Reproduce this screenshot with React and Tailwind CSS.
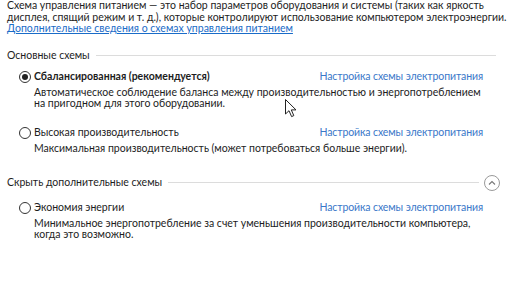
import React from 'react';

function Radio({ checked }) {
  return (
    <span className="flex items-center justify-center w-[12px] h-[12px] rounded-full border border-[#333] bg-white shrink-0">
      {checked && <span className="w-[6px] h-[6px] rounded-full bg-[#222]" />}
    </span>
  );
}

function Plan({ checked, title, bold, children }) {
  return (
    <div className="pl-[12px]">
      <div className="flex items-center h-[14px]">
        <Radio checked={checked} />
        <span className={'ml-[3px] ' + (bold ? 'font-bold' : '')}>{title}</span>
        <a className="ml-auto mr-[33px] text-[#3a78c9] tracking-[-0.1px]">Настройка схемы электропитания</a>
      </div>
      <p className="pl-[15px] mt-[3px] leading-[11.7px]">{children}</p>
    </div>
  );
}

function Cursor() {
  return (
    <svg className="absolute left-[285px] top-[99px]" width="12" height="19" viewBox="0 0 12 19">
      <path d="M0.5 0.5 L0.5 15 L4 11.7 L6.6 17.6 L8.8 16.6 L6.3 10.9 L11 10.9 Z" fill="#fff" stroke="#222" strokeWidth="1" strokeLinejoin="round" />
    </svg>
  );
}

export default function App() {
  return (
    <div className="relative w-[516px] h-[290px] overflow-hidden bg-white text-[#1d1d1d] text-[10.5px] font-['Lato',sans-serif] leading-[11.5px] whitespace-nowrap">
      <div className="pl-[7px]">
        <p>
          Схема управления питанием — это набор параметров оборудования и системы (таких как яркость
          <br />
          дисплея, спящий режим и т. д.), которые контролируют использование компьютером электроэнергии.
        </p>
        <a className="text-[#1a6cc8] underline">Дополнительные сведения о схемах управления питанием</a>

        <div className="flex items-center mt-[15px] h-[12px]">
          <span>Основные схемы</span>
          <div className="flex-1 ml-[6px] mr-[20px] h-px bg-[#dcdcdc]" />
        </div>

        <div className="mt-[8px]">
          <Plan checked bold title="Сбалансированная (рекомендуется)">
            Автоматическое соблюдение баланса между производительностью и энергопотреблением
            <br />
            на пригодном для этого оборудовании.
          </Plan>
        </div>

        <div className="mt-[16px]">
          <Plan title="Высокая производительность">
            Максимальная производительность (может потребоваться больше энергии).
          </Plan>
        </div>

        <div className="flex items-center mt-[20px] h-[16px]">
          <span>Скрыть дополнительные схемы</span>
          <div className="flex-1 ml-[6px] mr-[5px] h-px bg-[#dcdcdc]" />
          <span className="flex items-center justify-center w-[16px] h-[16px] rounded-full border border-[#9a9a9a] mr-[16px]">
            <svg width="8" height="6" viewBox="0 0 8 6">
              <path d="M1 4.5 L4 1.5 L7 4.5" fill="none" stroke="#777" strokeWidth="1.1" />
            </svg>
          </span>
        </div>

        <div className="mt-[10px]">
          <Plan title="Экономия энергии">
            Минимальное энергопотребление за счет уменьшения производительности компьютера,
            <br />
            когда это возможно.
          </Plan>
        </div>
      </div>
      <Cursor />
    </div>
  );
}
